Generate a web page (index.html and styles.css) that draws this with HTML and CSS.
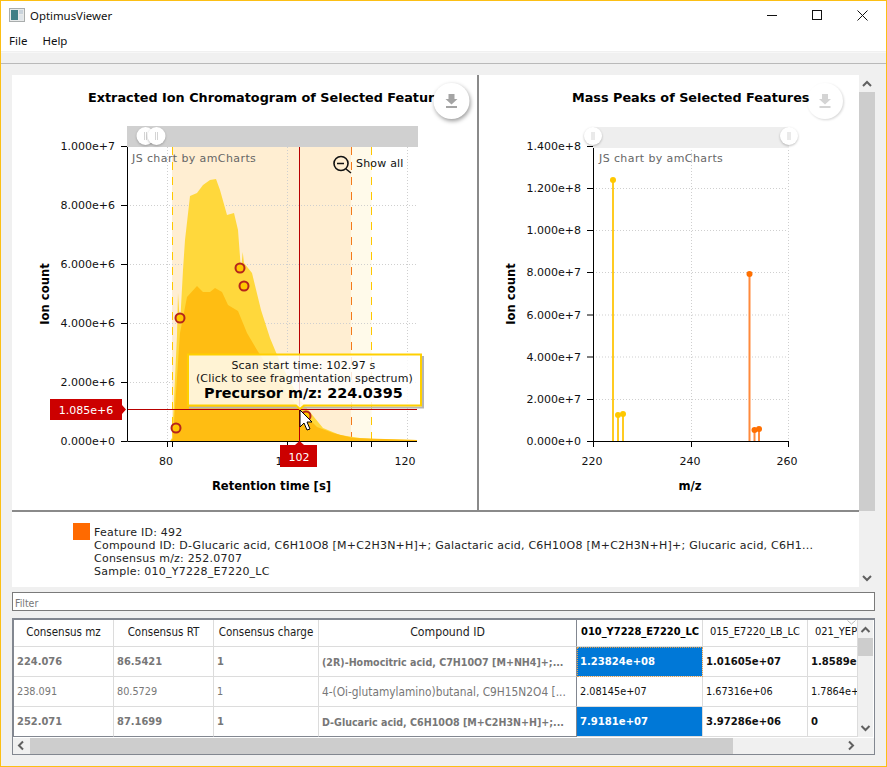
FILE: index.html
```html
<!DOCTYPE html>
<html lang="en">
<head>
<meta charset="utf-8">
<title>OptimusViewer</title>
<link rel="stylesheet" href="styles.css">
</head>
<body>
<div class="window">
  <header class="titlebar">
    <svg class="app-icon" width="16" height="14" viewBox="0 0 16 14"><rect x=".5" y=".5" width="15" height="13" fill="#e8eaea" stroke="#a9adad"/><rect x="2" y="2" width="7" height="10" fill="#3f7f86"/><rect x="10" y="2" width="4" height="4" fill="#c9d3dc"/><rect x="10" y="7" width="4" height="5" fill="#dfe5ea"/></svg>
    <span class="app-name">OptimusViewer</span>
    <div class="win-controls">
      <svg width="11" height="11" viewBox="0 0 11 11"><path d="M0 5.5H10" stroke="#111" fill="none"/></svg>
      <svg width="11" height="11" viewBox="0 0 11 11"><rect x=".5" y=".5" width="9" height="9" stroke="#111" fill="none"/></svg>
      <svg width="11" height="11" viewBox="0 0 11 11"><path d="M.5 .5L10.5 10.5M10.5 .5L.5 10.5" stroke="#111" fill="none"/></svg>
    </div>
  </header>
  <nav class="menubar"><span>File</span><span>Help</span></nav>
  <div class="strip"></div>
  <main class="main">
    <section class="panel">
      <div class="panel-body">
        <div class="charts">
          <svg class="chart chart-left" width="465" height="435" viewBox="12 75 465 435">
            <rect class="band" x="172" y="147" width="179" height="294"/>
            <rect class="band-light" x="351" y="147" width="20.5" height="294"/>
            <path class="grid" d="M127 205.5H417M127 264.5H417M127 323.5H417M127 382.5H417M167.5 147V441M287.5 147V441M407.5 147V441"/>
            <path class="dash-yellow" d="M172.5 147V441M371.5 147V441"/>
            <path class="dash-orange" d="M351.5 147V441"/>
            <path class="area-yellow" d="M127 441L170 441L172 438L174 400L177 335L178 293L180 325L183 270L185 240L190 196L197 193L203 185L210 180L216 179L220 190L227 215L234 213L238 230L241 270L242.700 252L244 263L252 273L261 310L270 338L280 362L300 400L323 428L340 435L360 438L373 439L417 440L417 441Z"/>
            <path class="area-orange" d="M127 441L171 441L173 438L175 407L180 333L187 297L197 286L203 292L210 292L215 288L222 292L228 305L238 311L247 333L257 350L273 375L300 410L317 427L333 433L353 438L417 440L417 441Z"/>
            <path class="cross" d="M299.500 147V441M127 409.500H417"/>
            <path class="axis" d="M127.500 146V441.500H417M121 146.500H127M121 205.500H127M121 264.500H127M121 323.500H127M121 382.500H127M121 441.500H127M167.500 441V447M287.500 441V447M407.500 441V447M172.500 441V447M351.500 441V447M371.500 441V447"/>
            <rect class="scroll-track" x="127" y="126" width="291" height="21"/>
            <circle class="knob" cx="145.500" cy="136" r="9"/><path class="knob-grip" d="M144.500 132V140M146.500 132V140"/>
            <circle class="knob" cx="156.500" cy="136" r="9"/><path class="knob-grip" d="M155.500 132V140M157.500 132V140"/>
            <text class="credit" x="132" y="162">JS chart by amCharts</text>
            <circle class="zoom-lens" cx="341" cy="163.500" r="7"/><path class="zoom-lens" d="M346 169L351 173M337 163.500H344"/>
            <text class="tick spaced" x="356" y="167">Show all</text>
            <text class="tick end" x="115" y="150">1.000e+7</text>
            <text class="tick end" x="115" y="209">8.000e+6</text>
            <text class="tick end" x="115" y="268">6.000e+6</text>
            <text class="tick end" x="115" y="327">4.000e+6</text>
            <text class="tick end" x="115" y="386">2.000e+6</text>
            <text class="tick end" x="115" y="445">0.000e+0</text>
            <text class="tick mid" x="166" y="465">80</text>
            <text class="tick mid" x="286" y="465">100</text>
            <text class="tick mid" x="405" y="465">120</text>
            <text class="axis-title" transform="translate(49 294) rotate(-90)">Ion count</text>
            <text class="axis-title" x="271.500" y="490">Retention time [s]</text>
            <circle class="mark" cx="176" cy="428" r="4.500"/>
            <circle class="mark" cx="180" cy="318" r="4.500"/>
            <circle class="mark" cx="240" cy="268" r="4.500"/>
            <circle class="mark" cx="244" cy="286" r="4.500"/>
            <circle class="mark" cx="306" cy="416" r="4.500"/>
            <path class="tip-shadow" d="M423 356V407.500H189"/>
            <path class="tip-box" d="M188 354.500H421V405.500H304L300 409L296 405.500H188Z"/>
            <text class="tick mid spaced" x="303.500" y="369">Scan start time: 102.97 s</text>
            <text class="tick mid spaced" x="304.500" y="382">(Click to see fragmentation spectrum)</text>
            <text class="tip-strong" x="303.500" y="398">Precursor m/z: 224.0395</text>
            <path class="cursor" d="M300 410V427L304 423L307 430L310 429L307 422L312 422Z"/>
            <path class="balloon" d="M50 399H122V405L126 409.500L122 414V420H50Z"/>
            <text class="balloon-text" x="86" y="414">1.085e+6</text>
            <path class="balloon" d="M280 445H295L299.500 441L304 445H317V467H280Z"/>
            <text class="balloon-text" x="299" y="461">102</text>
            <text class="title" x="88" y="102">Extracted Ion Chromatogram of Selected Features</text>
            <circle class="dl" cx="451.500" cy="101" r="18"/>
            <path class="dl-icon" d="M448.500 94H454.500V99H457.500L451.500 104.500L445.500 99H448.500ZM446 106H457V108H446Z"/>
          </svg>
          <div class="v-divider"></div>
          <svg class="chart chart-right" width="380" height="435" viewBox="479 75 380 435">
            <path class="grid" d="M593 188.500H788M593 230.500H788M593 272.500H788M593 315H788M593 357H788M593 399.500H788M691.500 147V441M788.500 147V441"/>
            <path class="stem-y" d="M613 180V441M618 415V441M623 414V441"/>
            <path class="stem-o" d="M749.500 274V441M754.500 430V441M759 429V441"/>
            <circle class="dot-y" cx="613" cy="180" r="3"/><circle class="dot-y" cx="618" cy="415" r="3"/><circle class="dot-y" cx="623" cy="414" r="3"/>
            <circle class="dot-o" cx="749.500" cy="274" r="3"/><circle class="dot-o" cx="754.500" cy="430" r="3"/><circle class="dot-o" cx="759" cy="429" r="3"/>
            <path class="axis" d="M593.500 146V441.500H789M587 146.500H593M587 188.500H593M587 230.500H593M587 272.500H593M587 315H593M587 357H593M587 399.500H593M587 441.500H593M593.500 441V447M691.500 441V447M788.500 441V447"/>
            <rect class="scroll-track-light" x="593" y="127" width="196" height="21"/>
            <circle class="knob" cx="593" cy="136" r="9"/><path class="knob-grip" d="M592 132V140M594 132V140"/>
            <circle class="knob" cx="789" cy="136" r="9"/><path class="knob-grip" d="M788 132V140M790 132V140"/>
            <text class="credit" x="599" y="162">JS chart by amCharts</text>
            <text class="tick end" x="581" y="150">1.400e+8</text>
            <text class="tick end" x="581" y="192">1.200e+8</text>
            <text class="tick end" x="581" y="234">1.000e+8</text>
            <text class="tick end" x="581" y="276">8.000e+7</text>
            <text class="tick end" x="581" y="319">6.000e+7</text>
            <text class="tick end" x="581" y="361">4.000e+7</text>
            <text class="tick end" x="581" y="403">2.000e+7</text>
            <text class="tick end" x="581" y="445">0.000e+0</text>
            <text class="tick mid" x="592" y="465">220</text>
            <text class="tick mid" x="690" y="465">240</text>
            <text class="tick mid" x="787" y="465">260</text>
            <text class="axis-title" transform="translate(515 294) rotate(-90)">Ion count</text>
            <text class="axis-title" x="690" y="490">m/z</text>
            <circle class="dl faded" cx="825" cy="101" r="18"/>
            <path class="dl-icon faded" d="M822 94H828V99H831L825 104.500L819 99H822ZM819.500 106H830.500V108H819.500Z"/>
            <text class="title" x="572" y="102">Mass Peaks of Selected Features</text>
          </svg>
        </div>
        <div class="legend">
          <span class="swatch"></span>
          <div class="legend-text">
            <div>Feature ID: 492</div>
            <div>Compound ID: D-Glucaric acid, C6H10O8 [M+C2H3N+H]+; Galactaric acid, C6H10O8 [M+C2H3N+H]+; Glucaric acid, C6H1...</div>
            <div>Consensus m/z: 252.0707</div>
            <div>Sample: 010_Y7228_E7220_LC</div>
          </div>
        </div>
      </div>
      <div class="vscroll outer">
        <svg class="arrow" width="16" height="17" viewBox="0 0 16 17"><path d="M4 11L8 7L12 11" /></svg>
        <div class="vthumb outer-thumb"></div>
        <div class="vspace"></div>
        <svg class="arrow" width="16" height="17" viewBox="0 0 16 17"><path d="M4 6L8 10L12 6" /></svg>
      </div>
    </section>
    <div class="filter">Filter</div>
    <section class="table-frame">
      <div class="table-top">
        <div class="grid-table">
          <div class="cell head">Consensus mz</div>
          <div class="cell head">Consensus RT</div>
          <div class="cell head">Consensus charge</div>
          <div class="cell head frozen-end">Compound ID</div>
          <div class="cell head data strong-head">010_Y7228_E7220_LC</div>
          <div class="cell head data">015_E7220_LB_LC</div>
          <div class="cell head data">021_YEPD_LC</div>

          <div class="cell key bold num">224.076</div>
          <div class="cell key bold num">86.5421</div>
          <div class="cell key bold num">1</div>
          <div class="cell key bold frozen-end">(2R)-Homocitric acid, C7H10O7 [M+NH4]+;...</div>
          <div class="cell data bold selected focus">1.23824e+08</div>
          <div class="cell data bold">1.01605e+07</div>
          <div class="cell data bold">1.8589e+06</div>

          <div class="cell key">238.091</div>
          <div class="cell key">80.5729</div>
          <div class="cell key">1</div>
          <div class="cell key name frozen-end">4-(Oi-glutamylamino)butanal, C9H15N2O4 [...</div>
          <div class="cell data">2.08145e+07</div>
          <div class="cell data">1.67316e+06</div>
          <div class="cell data">1.7864e+06</div>

          <div class="cell key bold num last">252.071</div>
          <div class="cell key bold num last">87.1699</div>
          <div class="cell key bold num last">1</div>
          <div class="cell key bold last frozen-end">D-Glucaric acid, C6H10O8 [M+C2H3N+H]+;...</div>
          <div class="cell data bold selected last">7.9181e+07</div>
          <div class="cell data bold last">3.97286e+06</div>
          <div class="cell data bold last">0</div>
        </div>
        <div class="vscroll inner">
          <svg class="arrow" width="15" height="18" viewBox="0 0 15 18"><path d="M3.500 12L7.500 8L11.500 12"/></svg>
          <div class="vthumb inner-thumb"></div>
          <div class="vspace"></div>
          <svg class="arrow" width="15" height="18" viewBox="0 0 15 18"><path d="M3.500 7L7.500 11L11.500 7"/></svg>
        </div>
        <svg class="sort-mark" width="9" height="5" viewBox="0 0 9 5"><path d="M.5 .5L4.500 4L8.500 .5"/></svg>
      </div>
      <div class="hscroll">
        <svg class="arrow" width="17" height="15" viewBox="0 0 17 15"><path d="M10 3.500L6 7.500L10 11.500"/></svg>
        <div class="hthumb"></div>
        <div class="vspace"></div>
        <svg class="arrow" width="17" height="15" viewBox="0 0 17 15"><path d="M7 3.500L11 7.500L7 11.500"/></svg>
        <div class="corner"></div>
      </div>
    </section>
  </main>
</div>
</body>
</html>
```
FILE: styles.css
```css
* { box-sizing: border-box; }
html, body { margin: 0; padding: 0; }
body { width: 887px; height: 767px; overflow: hidden; background: #f0f0f0; }

.window {
  width: 887px; height: 767px;
  border: 1px solid #fcbf14;
  background: #f0f0f0;
  display: flex; flex-direction: column;
  font-family: "Noto Sans", sans-serif;
  font-size: 11.5px;
  color: #111;
}
.titlebar { height: 30px; background: #fff; display: flex; align-items: center; padding: 0 0 2px 8px; flex: none; }
.app-icon { margin-right: 5px; }
.app-name { font-size: 11.4px; }
.win-controls { margin-left: auto; display: flex; gap: 34px; padding-right: 18px; margin-top: 1px; }
.menubar { height: 21px; background: #fff; display: flex; gap: 15px; padding: 0 0 0 8px; flex: none; line-height: 19px; border-bottom: 1px solid #f0f0f0; }
.strip { height: 12px; flex: none; border-top: 1px solid #f7f7f7; border-bottom: 1px solid #b9b9b9; background: #f0f0f0; }
.main { flex: 1; padding: 11px 11px 0; display: flex; flex-direction: column; min-height: 0; }

.panel { height: 512px; display: flex; flex: none; }
.panel-body { width: 847px; background: #fff; display: flex; flex-direction: column; }
.charts { height: 435px; display: flex; flex: none; border-bottom: 0; }
.chart { display: block; flex: none; background: #fff; }
.v-divider { width: 2px; background: #8a8a8a; flex: none; }
.legend { flex: 1; border-top: 2px solid #8a8a8a; display: flex; padding: 11px 0 0 61px; font-family: "DejaVu Sans", sans-serif; font-size: 11px; letter-spacing: .24px; color: #222; }
.swatch { width: 17px; height: 17px; background: #ff6a00; margin-right: 4px; flex: none; }
.legend-text { line-height: 13px; padding-top: 3px; white-space: nowrap; }

.vscroll { width: 16px; display: flex; flex-direction: column; background: #f0f0f0; flex: none; }
.vspace { flex: 1; }
.arrow { display: block; flex: none; }
.arrow path { fill: none; stroke: #606060; stroke-width: 2; }
.vthumb { background: #cdcdcd; flex: none; }
.outer-thumb { height: 419px; }
.inner { width: 15px; }
.inner-thumb { height: 18px; }

.filter {
  margin-top: 5px; height: 19px; flex: none;
  background: #fff; border: 1px solid #7a7a7a;
  padding: 2px 0 0 2px; line-height: 16px;
  font-family: "DejaVu Sans Condensed", "DejaVu Sans", sans-serif; font-size: 10.5px; color: #777;
}

.table-frame { position: relative; margin-top: 7px; height: 137px; flex: none; background: #fff; border: 1px solid #828790; display: flex; flex-direction: column; }
.table-top { position: relative; display: flex; height: 118px; flex: none; border-top: 1px solid #828790; }
.grid-table {
  width: 845px; flex: none; overflow: hidden;
  border-left: 1px solid #828790;
  display: grid;
  grid-template-columns: 100px 100px 105px 258px 126px 105px 50px;
  grid-template-rows: 27px 30px 30px 30px;
  font-family: "DejaVu Sans Condensed", "DejaVu Sans", sans-serif;
  font-size: 10.8px;
}
.cell { padding: 0 3px; overflow: hidden; white-space: nowrap; display: flex; align-items: center; border-right: 1px solid #dcdcdc; border-bottom: 1px solid #dcdcdc; color: #777; }
.head { justify-content: center; color: #1c1c1c; font-size: 11.5px; padding-bottom: 2px; }
.head.frozen-end { font-size: 12.2px; }
.head.data { justify-content: flex-start; padding: 0 0 4px 7px; font-size: 11px; }
.head.strong-head { font-weight: 700; color: #000; padding-left: 4px; }
.key.last { border-bottom: 1px solid #828790; }
.frozen-end { border-right: 1px solid #828790; }
.data { color: #111; }
.bold { font-weight: 700; }
.data.bold { font-size: 11.2px; }
.key.bold { font-size: 10.6px; }
.key.bold.num { font-size: 11px; }
.key.name { font-size: 11.8px; }
.selected { background: #0078d7; color: #fff; }
.focus { outline: 1px dotted #e3a04f; outline-offset: -1px; }
.sort-mark { position: absolute; left: 834px; top: 0; }
.sort-mark path { fill: none; stroke: #b9b9b9; }

.hscroll { height: 17px; display: flex; background: #f0f0f0; flex: 1; margin-top: 1px; }
.hthumb { width: 703px; background: #cdcdcd; flex: none; }
.corner { width: 15px; background: #f0f0f0; flex: none; }

.title { font-family: "DejaVu Sans", sans-serif; font-weight: 700; font-size: 12.8px; fill: #000; }
.tick { font-family: "DejaVu Sans", sans-serif; font-size: 11px; fill: #111; }
.spaced { letter-spacing: .2px; }
.end { text-anchor: end; }
.mid { text-anchor: middle; }
.credit { font-family: "DejaVu Sans", sans-serif; font-size: 11px; letter-spacing: .4px; fill: #666; }
.axis-title { font-family: "DejaVu Sans", sans-serif; font-weight: 700; font-size: 11.6px; fill: #000; text-anchor: middle; }
.tip-strong { font-family: "DejaVu Sans", sans-serif; font-weight: 700; font-size: 14.4px; fill: #000; text-anchor: middle; }
.balloon-text { font-family: "DejaVu Sans", sans-serif; font-size: 11px; fill: #fff; text-anchor: middle; }

.band { fill: #ffeed2; }
.band-light { fill: #fffaea; }
.grid { fill: none; stroke: #cfcfcf; stroke-dasharray: 1 2; }
.dash-yellow { fill: none; stroke: #ffc800; stroke-dasharray: 8 7; }
.dash-orange { fill: none; stroke: #f47a1a; stroke-dasharray: 8 7; }
.area-yellow { fill: #ffd83c; }
.area-orange { fill: #ffbd12; }
.cross { fill: none; stroke: #b80000; }
.axis { fill: none; stroke: #000; }
.scroll-track { fill: #d0d0d0; }
.scroll-track-light { fill: #eeeeee; }
.knob { fill: #fff; filter: drop-shadow(0 1px 1px rgba(0,0,0,.25)); }
.knob-grip { fill: none; stroke: #d4d4d4; }
.zoom-lens { fill: none; stroke: #111; stroke-width: 1.6; }
.mark { fill: #ffc800; stroke: #b5261c; stroke-width: 2; }
.tip-shadow { fill: none; stroke: #b5b5b5; stroke-width: 2; }
.tip-box { fill: rgba(255,255,255,.82); stroke: #ffd000; stroke-width: 2; }
.cursor { fill: #fff; stroke: #000; stroke-width: 1; }
.balloon { fill: #cc0000; }
.dl { fill: #fff; filter: drop-shadow(1px 2px 2px rgba(0,0,0,.4)); }
.dl-icon { fill: #a4a4a4; }
.dl.faded { filter: drop-shadow(1px 1px 1px rgba(0,0,0,.16)); }
.dl-icon.faded { fill: #d4d4d4; }
.stem-y { fill: none; stroke: #ffcb21; stroke-width: 2; }
.stem-o { fill: none; stroke: #ff8a3c; stroke-width: 2; }
.dot-y { fill: #ffc800; }
.dot-o { fill: #ff6f00; }
```
